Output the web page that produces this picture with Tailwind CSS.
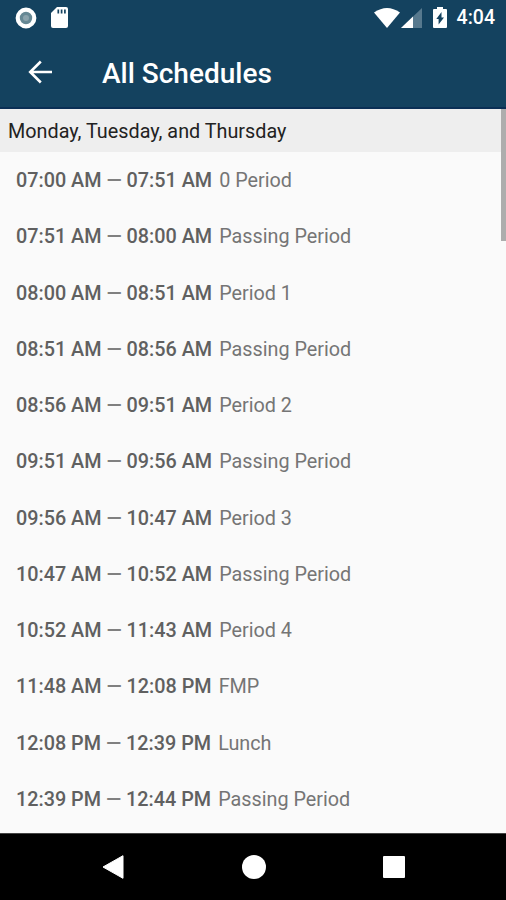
<!DOCTYPE html>
<html lang="en"><head><meta charset="utf-8"><title>All Schedules</title>
<script src="https://cdn.jsdelivr.net/npm/@tailwindcss/browser@4"></script></head>
<body class="w-[506px] h-[900px] overflow-hidden flex flex-col bg-[#fafafa] font-[Roboto,sans-serif]">
<header class="bg-[#14425f] text-white h-[109px] shrink-0 border-b-2 border-[#0b2f55]">
<div class="h-[35px] flex items-center pl-[15px] pr-[11px]">
<svg class="w-[22px] h-[22px]" viewBox="0 0 22 22"><circle cx="11" cy="11" r="8.300" fill="#668894" stroke="#fff" stroke-width="4.200"/><circle cx="11" cy="11" r="3" fill="#8ba3ac"/></svg>
<svg class="w-[17px] h-[21px] ml-[14px]" viewBox="0 0 17 21"><path fill="#fff" d="M6 0h9q2 0 2 2v17q0 2-2 2H2q-2 0-2-2V6z"/><path stroke="#14425f" stroke-width="1.700" d="M7.300 2.500v4M10.600 2.500v4M13.900 2.500v4"/></svg>
<svg class="w-[26px] h-5 ml-auto" viewBox="0 0 26 20"><path fill="#fff" d="M0 4.500Q13-4.500 26 4.500L13 20z"/></svg>
<svg class="w-[21px] h-5 ml-px" viewBox="0 0 21 20"><path fill="#57798e" d="M21 0v20H0z"/><path fill="#fff" d="M12 8.600V20H0z"/></svg>
<svg class="w-[14px] h-[21px] ml-[11px]" viewBox="0 0 14 21"><path fill="#fff" d="M4 0h6v2h3q1 0 1 1v17q0 1-1 1H1q-1 0-1-1V3q0-1 1-1h3z"/><path fill="#14425f" d="M8.500 5v5.500H11L5.600 17.500v-5.500H3.300z"/></svg>
<span class="text-[19.500px] font-medium ml-[10px] pt-px leading-5">4:04</span>
</div>
<div class="h-[74px] flex items-center pl-7">
<svg class="w-6 h-6" viewBox="0 0 24 24" fill="none" stroke="#fff" stroke-width="2.600"><path d="M24 12H2M12.800 1.500 2.200 12l10.600 10.500"/></svg>
<h1 class="ml-[50px] pt-1 text-[28px] leading-none font-medium">All Schedules</h1></div>
</header>
<main class="flex-1 min-h-0 overflow-hidden relative">
<h2 class="h-[43px] bg-[#eee] pl-2 pt-[3px] flex items-center text-[19.800px] text-[#222]">Monday, Tuesday, and Thursday</h2>
<ul id="list" class="text-[19.800px] text-[#757575]"></ul>
<div class="absolute right-0 top-0 w-[5px] h-[132px] bg-[#adadad]"></div>
</main>
<nav class="h-[67px] shrink-0 bg-black flex items-center justify-between pl-[102px] pr-[101px] border-t border-[#444]">
<svg class="w-[22px] h-6" viewBox="0 0 22 24"><path fill="#fff" stroke="#fff" stroke-linejoin="round" d="M21 .7v22.600L1 12z"/></svg>
<svg class="w-6 h-6" viewBox="0 0 24 24"><circle cx="12" cy="12" r="12" fill="#fff"/></svg>
<svg class="w-[22px] h-[22px]" viewBox="0 0 22 22"><rect width="22" height="22" rx="1" fill="#fff"/></svg>
</nav>
<script>
const rows=[["07:00 AM","07:51 AM","0 Period"],["07:51 AM","08:00 AM","Passing Period"],["08:00 AM","08:51 AM","Period 1"],["08:51 AM","08:56 AM","Passing Period"],["08:56 AM","09:51 AM","Period 2"],["09:51 AM","09:56 AM","Passing Period"],["09:56 AM","10:47 AM","Period 3"],["10:47 AM","10:52 AM","Passing Period"],["10:52 AM","11:43 AM","Period 4"],["11:48 AM","12:08 PM","FMP"],["12:08 PM","12:39 PM","Lunch"],["12:39 PM","12:44 PM","Passing Period"]];
document.getElementById("list").innerHTML=rows.map(r=>`<li class="h-[56.250px] flex items-center pl-4 pt-[1.500px] whitespace-pre"><b class="font-medium text-[#606060]">${r[0]} <span class="text-[#808080]">—</span> ${r[1]}</b><span class="ml-[7px]">${r[2]}</span></li>`).join("");
</script>
</body></html>
